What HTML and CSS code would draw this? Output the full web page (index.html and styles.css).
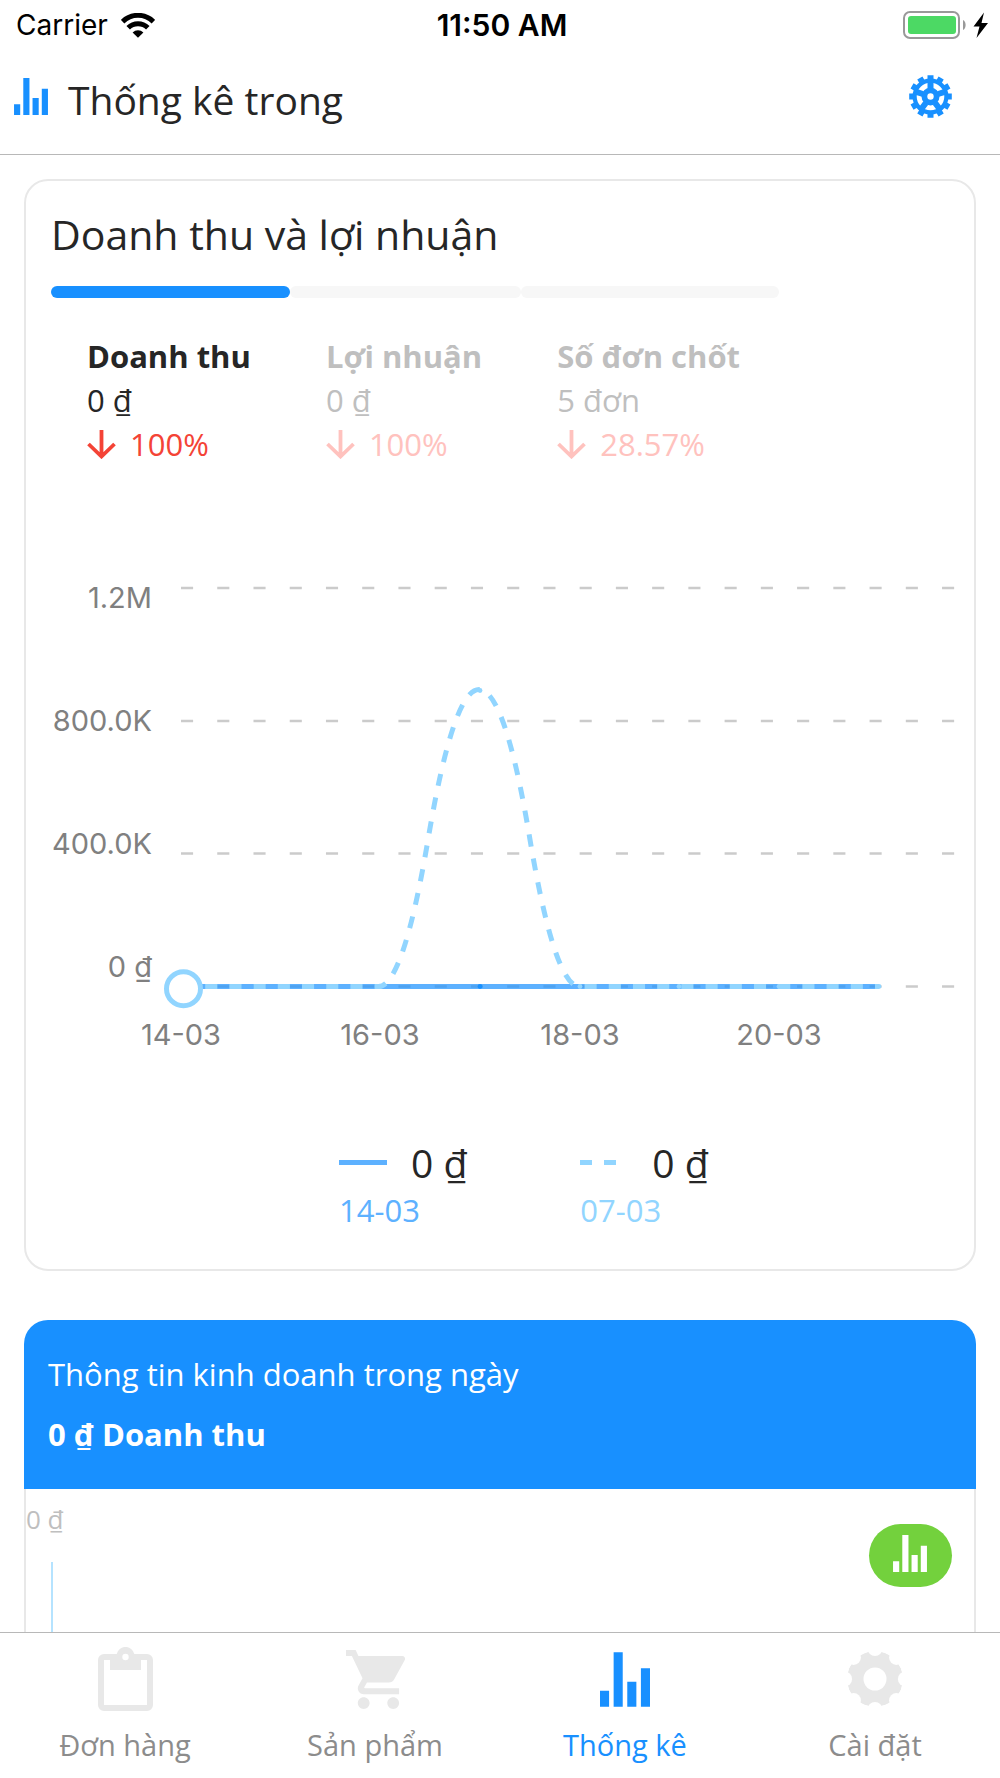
FILE: index.html
```html
<!DOCTYPE html>
<html lang="vi">
<head>
    <meta charset="UTF-8">
    <meta name="viewport" content="width=device-width, initial-scale=1.0">
    <title>Thống kê</title>
    <link rel="stylesheet" href="styles.css">
</head>
<body>
    <svg width="0" height="0" class="sprite" aria-hidden="true">
        <symbol id="icon-stats" viewBox="0 0 22 24">
            <path d="M0 17h4v7H0zM6 0h4v24H6zM12 13h4v11h-4zM18 7h4v17h-4z"/>
        </symbol>
        <symbol id="icon-down" viewBox="0 0 29 29">
            <path d="M14.500 0v26M1.500 14l13 12.500 13-12.500" fill="none" stroke="currentColor" stroke-width="3.800"/>
        </symbol>
    </svg>

    <div class="app">
        <div class="status-bar">
            <div class="carrier">
                <span>Carrier</span>
                <svg width="34" height="25" viewBox="0 0 34 25" fill="none" stroke="#000" stroke-width="5">
                    <path d="M1.600 8.600a22 22 0 0 1 30.800 0"/>
                    <path d="M7.200 14.800a14 14 0 0 1 19.600 0"/>
                    <path d="M11.600 19.400a8 8 0 0 1 10.800 0L17 24.700z" fill="#000" stroke="none"/>
                </svg>
            </div>
            <span class="time">11:50 AM</span>
            <div class="battery">
                <svg width="85" height="28" viewBox="0 0 85 28">
                    <rect x="1" y="1" width="55" height="26" rx="6" fill="none" stroke="#999" stroke-width="2"/>
                    <rect x="5" y="5" width="48" height="18" rx="3" fill="#4cd964"/>
                    <path d="M60 9c3.500 1.500 3.500 8.500 0 10z" fill="#999"/>
                    <path d="M81 1.500L70.500 15.500h6L73.500 27 85 12h-6.500z" fill="#000"/>
                </svg>
            </div>
        </div>

        <header class="header">
            <svg class="header-icon" width="34" height="37" fill="currentColor"><use href="#icon-stats"/></svg>
            <h1>Thống kê trong</h1>
            <button class="settings" type="button" aria-label="Cài đặt thống kê">
                <svg width="43" height="43" viewBox="-21.500 -21.500 43 43" stroke="currentColor" stroke-width="6">
                    <circle r="18" fill="currentColor" stroke="none"/>
                    <path d="M0-21.300V21.300M-21.300 0H21.300M-10.650-18.450L10.650 18.450M-18.450-10.650L18.450 10.650M10.650-18.450L-10.650 18.450M18.450-10.650L-18.450 10.650"/>
                    <circle r="11.400" fill="none" stroke="#fff" stroke-width="4.800"/>
                    <path d="M0-8v-7M7.600-2.500l6.700-2.200M4.700 6.500l4.100 5.600M-4.700 6.500l-4.100 5.600M-7.600-2.500l-6.700-2.200"/>
                    <circle r="3.200" fill="#fff" stroke="none"/>
                </svg>
            </button>
        </header>

        <main class="content">
            <section class="card revenue">
                <h2>Doanh thu và lợi nhuận</h2>
                <div class="metrics">
                    <button class="metric active" type="button">
                        <strong>Doanh thu</strong>
                        <span>0 ₫</span>
                        <span class="change"><svg width="29" height="29"><use href="#icon-down"/></svg>100%</span>
                    </button>
                    <button class="metric" type="button">
                        <strong>Lợi nhuận</strong>
                        <span>0 ₫</span>
                        <span class="change"><svg width="29" height="29"><use href="#icon-down"/></svg>100%</span>
                    </button>
                    <button class="metric" type="button">
                        <strong>Số đơn chốt</strong>
                        <span>5 đơn</span>
                        <span class="change"><svg width="29" height="29"><use href="#icon-down"/></svg>28.57%</span>
                    </button>
                </div>

                <svg class="chart" viewBox="0 0 923 500">
                    <g class="grid">
                        <path d="M130 28H904"/>
                        <path d="M130 161H904"/>
                        <path d="M130 293.500H904"/>
                        <path d="M130 426.500H904"/>
                    </g>
                    <g class="axis axis-y">
                        <text x="101" y="48">1.2M</text>
                        <text x="101" y="171">800.0K</text>
                        <text x="101" y="294">400.0K</text>
                        <text x="101" y="417">0 ₫</text>
                    </g>
                    <g class="axis axis-x">
                        <text x="130" y="485">14-03</text>
                        <text x="329" y="485">16-03</text>
                        <text x="529" y="485">18-03</text>
                        <text x="728" y="485">20-03</text>
                    </g>
                    <path class="line-current" d="M130 426.500H828"/>
                    <circle cx="429" cy="426.500" r="2.400" fill="#1890ff"/>
                    <!-- tuần trước -->
                    <path class="line-previous" d="M130 426.500H327.400Q352.300 426.500 377.200 278.500Q402.500 129.500 428 129.500Q454 129.500 478.800 278.500Q503.700 426.500 528.600 426.500H828"/>
                    <g fill="#91d5ff">
                        <circle cx="230" cy="426.500" r="2.400"/>
                        <circle cx="329" cy="426.500" r="2.400"/>
                        <circle cx="429" cy="130.500" r="2.400"/>
                        <circle cx="529" cy="426.500" r="2.400"/>
                        <circle cx="628" cy="426.500" r="2.400"/>
                        <circle cx="728" cy="426.500" r="2.400"/>
                        <circle cx="828" cy="426.500" r="2.400"/>
                    </g>
                    <circle cx="132.500" cy="428.700" r="17" fill="#fff" stroke="#91d5ff" stroke-width="5"/>
                </svg>

                <div class="legend">
                    <div class="legend-item current">
                        <div class="legend-value">
                            <svg width="48" height="5"><path d="M0 2.500h48"/></svg>
                            <span>0 ₫</span>
                        </div>
                        <span class="legend-date">14-03</span>
                    </div>
                    <div class="legend-item previous">
                        <div class="legend-value">
                            <svg width="48" height="5"><path d="M0 2.500h48" stroke-dasharray="12"/></svg>
                            <span>0 ₫</span>
                        </div>
                        <span class="legend-date">07-03</span>
                    </div>
                </div>
            </section>

            <section class="daily">
                <div class="daily-header">
                    <h3>Thông tin kinh doanh trong ngày</h3>
                    <strong>0 ₫ Doanh thu</strong>
                </div>
                <div class="daily-body">
                    <span>0 ₫</span>
                    <div class="daily-axis"></div>
                </div>
            </section>

            <button class="fab" type="button" aria-label="Thống kê">
                <svg width="34" height="37" fill="currentColor"><use href="#icon-stats"/></svg>
            </button>
        </main>

        <nav class="tabs">
            <a href="#don-hang">
                <svg width="55" height="64" viewBox="0 0 55 64">
                    <path fill="currentColor" fill-rule="evenodd" d="M6 7H18.700a9 9 0 0 1 17.600 0H49a6 6 0 0 1 6 6v45a6 6 0 0 1-6 6H6a6 6 0 0 1-6-6V13a6 6 0 0 1 6-6zM6 13v45h43V13h-6v10H12V13zM27.500 6.800a3.200 3.200 0 1 0 0 6.400a3.200 3.200 0 1 0 0-6.400z"/>
                </svg>
                <span>Đơn hàng</span>
            </a>
            <a href="#san-pham">
                <svg width="59" height="59" viewBox="1 2 20 20" fill="currentColor">
                    <path d="M7 18c-1.100 0-2 .9-2 2s.9 2 2 2 2-.9 2-2-.9-2-2-2zM1 2v2h2l3.600 7.590-1.350 2.450c-.16.280-.25.610-.25.960 0 1.100.9 2 2 2h12v-2H7.420c-.14 0-.25-.11-.25-.25l.03-.12.9-1.630h7.450c.75 0 1.410-.41 1.750-1.030l3.580-6.490A1 1 0 0 0 20 4H5.210l-.94-2H1zm16 16c-1.100 0-2 .9-2 2s.9 2 2 2 2-.9 2-2-.9-2-2-2z"/>
                </svg>
                <span>Sản phẩm</span>
            </a>
            <a class="active" href="#thong-ke">
                <svg width="50" height="55" fill="currentColor"><use href="#icon-stats"/></svg>
                <span>Thống kê</span>
            </a>
            <a href="#cai-dat">
                <svg width="56" height="56" viewBox="-28 -28 56 56">
                    <mask id="gear">
                        <circle r="28" fill="#fff"/>
                        <circle r="11.500"/>
                        <circle cy="-30.200" r="7.300"/>
                        <circle cy="30.200" r="7.300"/>
                        <circle cx="-30.200" r="7.300"/>
                        <circle cx="30.200" r="7.300"/>
                        <circle cx="-21.400" cy="-21.400" r="7.300"/>
                        <circle cx="21.400" cy="-21.400" r="7.300"/>
                        <circle cx="-21.400" cy="21.400" r="7.300"/>
                        <circle cx="21.400" cy="21.400" r="7.300"/>
                    </mask>
                    <circle r="28" fill="currentColor" mask="url(#gear)"/>
                </svg>
                <span>Cài đặt</span>
            </a>
        </nav>
    </div>
</body>
</html>
```

FILE: styles.css
```css
* {
    box-sizing: border-box;
}
body {
    margin: 0;
    font-family: "Open Sans", "Noto Sans", sans-serif;
    background-color: #fff;
    color: #262626;
}
h1, h2, h3 {
    margin: 0;
    font-weight: normal;
}
button {
    margin: 0;
    padding: 0;
    border: none;
    background: none;
    font: inherit;
    color: inherit;
    text-align: left;
    cursor: pointer;
}
svg {
    display: block;
    flex: none;
}
.sprite {
    position: absolute;
}
.app {
    display: flex;
    flex-direction: column;
    height: 100vh;
}

/* Status bar */
.status-bar {
    display: grid;
    grid-template-columns: 1fr auto 1fr;
    align-items: center;
    height: 48px;
    padding: 2px 12px 0 16px;
    font-family: Inter, sans-serif;
    font-size: 28px;
    color: #000;
}
.carrier {
    display: flex;
    align-items: center;
    gap: 13px;
}
.time {
    font-size: 30px;
    font-weight: 600;
}
.battery {
    display: flex;
    justify-content: flex-end;
}

/* Header */
.header {
    display: flex;
    align-items: baseline;
    gap: 20px;
    padding: 25px 45px 27px 14px;
    border-bottom: 1px solid #b8b8b8;
}
.header h1 {
    flex: 1;
    font-size: 39px;
    line-height: 54px;
}
.header-icon {
    color: #1890ff;
}
.settings {
    align-self: flex-start;
    padding: 2px 3px;
    color: #1890ff;
}

/* Content */
.content {
    position: relative;
    flex: 1;
    min-height: 0;
    overflow: hidden;
    padding: 24px 24px 0;
}
.card {
    padding: 25px 0 37px 25px;
    border: 2px solid #e8e8e8;
    border-radius: 24px;
}
.card h2 {
    font-size: 41px;
    line-height: 56px;
}
.metrics {
    display: flex;
    margin-top: 24px;
}
.metric {
    display: flex;
    flex-direction: column;
    padding: 0 39px 0 36px;
    font-size: 31px;
    line-height: 44px;
    color: #bfbfbf;
}
.metric::before {
    content: "";
    height: 12px;
    margin: 0 -39px 36px -36px;
    border-radius: 6px;
    background-color: #f7f7f7;
}
.metric.active {
    color: #262626;
}
.metric.active::before {
    background-color: #1890ff;
}
.change {
    display: flex;
    align-items: center;
    gap: 14px;
    color: #ffc2be;
}
.active .change {
    color: #f44336;
}

/* Chart */
.chart {
    width: 100%;
    margin-top: 94px;
}
.grid path {
    stroke: #cbcbcb;
    stroke-width: 2.4;
    stroke-dasharray: 12.1 24.14;
}
.axis {
    font-family: Inter, sans-serif;
    font-size: 29px;
    fill: #808080;
}
.axis-y {
    text-anchor: end;
}
.axis-x {
    text-anchor: middle;
}
.line-current {
    stroke: rgba(24, 144, 255, 0.7);
    stroke-width: 5;
}
.line-previous {
    fill: none;
    stroke: #91d5ff;
    stroke-width: 5;
    stroke-dasharray: 12.1;
}
.legend {
    display: flex;
    gap: 113px;
    margin-top: 76px;
    padding-left: 288px;
}
.legend-value {
    display: flex;
    align-items: center;
    gap: 24px;
    font-size: 39px;
    line-height: 53px;
}
.legend-date {
    display: block;
    font-size: 31px;
    line-height: 43px;
}
.legend path {
    stroke: currentColor;
    stroke-width: 5;
}
.legend-value span {
    color: #262626;
}
.current {
    color: #5db1ff;
}
.previous {
    color: #91d5ff;
}

/* Daily info */
.daily {
    margin-top: 49px;
}
.daily-header {
    display: flex;
    flex-direction: column;
    gap: 18px;
    padding: 33px 24px 34px;
    border-radius: 24px 24px 0 0;
    background-color: #1890ff;
    color: #fff;
    font-size: 31px;
    line-height: 42px;
}
.daily-header h3 {
    font-size: 31px;
}
.daily-body {
    padding-top: 12px;
    border: solid #e8e8e8;
    border-width: 0 2px;
    font-size: 26px;
    line-height: 36px;
    color: #bfbfbf;
}
.daily-axis {
    width: 2px;
    height: 400px;
    margin: 25px 0 0 25px;
    background-color: #b5e3ff;
}
.fab {
    position: absolute;
    right: 48px;
    bottom: 45px;
    padding: 11px 25px 15px 24px;
    border-radius: 32px;
    background-color: #73d13d;
    color: #fff;
}

/* Tab bar */
.tabs {
    display: grid;
    grid-template-columns: repeat(4, 1fr);
    padding: 14px 0 13px;
    border-top: 1px solid #b8b8b8;
}
.tabs a {
    display: grid;
    grid-template-rows: 64px 40px;
    gap: 14px;
    place-items: center;
    color: #e8e8e8;
    font-size: 29px;
    line-height: 40px;
    text-decoration: none;
}
.tabs span {
    color: #8c8c8c;
}
.tabs .active, .tabs .active span {
    color: #1890ff;
}
```
